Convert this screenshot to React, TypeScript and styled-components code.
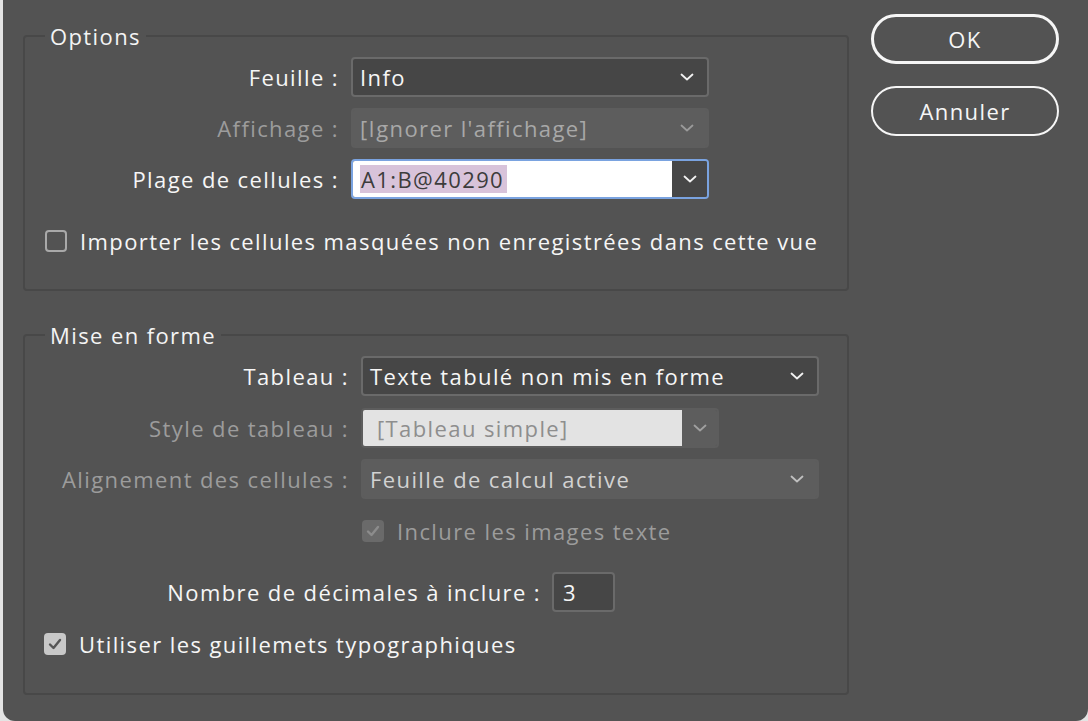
import React from 'react';
import styled, { createGlobalStyle } from 'styled-components';

const Global = createGlobalStyle`
  html, body {
    margin: 0;
    padding: 0;
    background: #e4e4e4;
    font-family: "Open Sans", "Liberation Sans", sans-serif;
  }
`;

const Page = styled.div`
  display: flex;
  width: 1088px;
  height: 721px;
  overflow: hidden;
  letter-spacing: 1.4px;
`;

const Dialog = styled.div`
  flex: 1;
  margin-left: 3px;
  background: #535353;
  border-bottom-left-radius: 12px;
  border-bottom-right-radius: 12px;
  display: flex;
  padding: 0 29px 0 20px;
  box-sizing: border-box;
`;

const Left = styled.div`
  width: 826px;
  display: flex;
  flex-direction: column;
`;

const Group = styled.fieldset<{ $top: number; $pb: number }>`
  margin: ${p => p.$top}px 0 0;
  padding: 0 0 ${p => p.$pb}px;
  border: 2px solid #484848;
  border-radius: 4px;
  min-inline-size: 0;
`;

const Legend = styled.legend`
  margin-left: 20px;
  padding: 0 5px;
  font-size: 22px;
  line-height: 26px;
  color: #f4f4f4;
`;

const Row = styled.div<{ $mt: number; $gap?: number }>`
  display: flex;
  align-items: center;
  gap: ${p => p.$gap ?? 12}px;
  margin-top: ${p => p.$mt}px;
  height: 40px;
`;

const Label = styled.div<{ $w: number; $dim?: boolean }>`
  width: ${p => p.$w}px;
  text-align: right;
  font-size: 22px;
  color: ${p => (p.$dim ? '#9c9c9c' : '#f6f6f6')};
  white-space: nowrap;
`;

const Select = styled.div<{ $w: number; $disabled?: boolean }>`
  width: ${p => p.$w}px;
  height: 40px;
  box-sizing: border-box;
  border-radius: 4px;
  display: flex;
  align-items: center;
  justify-content: space-between;
  padding: 0 13px 0 7px;
  font-size: 22px;
  background: ${p => (p.$disabled ? '#5d5d5d' : '#464646')};
  border: 2px solid ${p => (p.$disabled ? '#5d5d5d' : '#6a6a6a')};
  color: ${p => (p.$disabled ? '#a8a8a8' : '#f6f6f6')};
  white-space: nowrap;
`;

const SelectText = styled.span<{ $soft?: boolean }>`
  color: ${p => (p.$soft ? '#d2d2d2' : 'inherit')};
`;

const Combo = styled.div<{ $w: number; $focus?: boolean }>`
  width: ${p => p.$w}px;
  height: 40px;
  box-sizing: border-box;
  border-radius: 4px;
  display: flex;
  overflow: hidden;
  border: 2px solid ${p => (p.$focus ? '#7aa3e0' : '#5d5d5d')};
`;

const ComboField = styled.div<{ $light?: boolean }>`
  flex: 1;
  display: flex;
  align-items: center;
  padding-left: ${p => (p.$light ? 14 : 7)}px;
  font-size: 22px;
  background: ${p => (p.$light ? '#e3e3e3' : '#ffffff')};
  color: ${p => (p.$light ? '#8e8e8e' : '#3c3c3c')};
  white-space: nowrap;
`;

const Selected = styled.span`
  background: #d8c3da;
  padding: 0 3px 0 1px;
  line-height: 28px;
`;

const ComboButton = styled.div<{ $disabled?: boolean }>`
  width: 35px;
  display: flex;
  align-items: center;
  justify-content: center;
  background: ${p => (p.$disabled ? '#5d5d5d' : '#474747')};
`;

const NumberField = styled.div`
  width: 63px;
  height: 40px;
  box-sizing: border-box;
  border: 2px solid #6a6a6a;
  border-radius: 4px;
  background: #464646;
  color: #f6f6f6;
  font-size: 22px;
  display: flex;
  align-items: center;
  padding-left: 9px;
`;

const CheckRow = styled.div<{ $mt: number; $indent: number }>`
  display: flex;
  align-items: center;
  gap: 13px;
  margin-top: ${p => p.$mt}px;
  padding-left: ${p => p.$indent}px;
  height: 30px;
`;

const Box = styled.div<{ $state: 'off' | 'on' | 'dim' }>`
  width: 22px;
  height: 22px;
  box-sizing: border-box;
  border-radius: 4px;
  display: flex;
  align-items: center;
  justify-content: center;
  border: ${p => (p.$state === 'off' ? '2px solid #a9a9a9' : 'none')};
  background: ${p => (p.$state === 'on' ? '#c8c8c8' : p.$state === 'dim' ? '#6a6a6a' : 'transparent')};
`;

const CheckText = styled.div<{ $dim?: boolean }>`
  font-size: 22px;
  color: ${p => (p.$dim ? '#9c9c9c' : '#f6f6f6')};
  white-space: nowrap;
`;

const Buttons = styled.div`
  margin-left: 22px;
  padding-top: 14px;
  display: flex;
  flex-direction: column;
  gap: 22px;
`;

const Button = styled.div<{ $primary?: boolean }>`
  width: 188px;
  height: 50px;
  box-sizing: border-box;
  border-radius: 25px;
  border: ${p => (p.$primary ? 3 : 2)}px solid #f6f6f6;
  display: flex;
  align-items: center;
  justify-content: center;
  font-size: 22px;
  color: #f6f6f6;
`;

const Chevron = ({ color = '#f2f2f2' }: { color?: string }) => (
  <svg width="14" height="8" viewBox="0 0 14 8">
    <polyline points="1.5,1.5 7,6.5 12.5,1.5" fill="none" stroke={color} strokeWidth="1.8" strokeLinecap="round" strokeLinejoin="round" />
  </svg>
);

const Tick = ({ color }: { color: string }) => (
  <svg width="14" height="12" viewBox="0 0 14 12">
    <polyline points="2,6.5 5.5,10 12,2" fill="none" stroke={color} strokeWidth="2.4" strokeLinecap="round" strokeLinejoin="round" />
  </svg>
);

export default function App() {
  return (
    <Page>
      <Global />
      <Dialog>
        <Left>
          <Group $top={23} $pb={33}>
            <Legend>Options</Legend>
            <Row $mt={8}>
              <Label $w={314}>Feuille :</Label>
              <Select $w={358}>
                <SelectText>Info</SelectText>
                <Chevron />
              </Select>
            </Row>
            <Row $mt={11}>
              <Label $w={314} $dim>Affichage :</Label>
              <Select $w={358} $disabled>
                <SelectText>[Ignorer l'affichage]</SelectText>
                <Chevron color="#9a9a9a" />
              </Select>
            </Row>
            <Row $mt={11}>
              <Label $w={314}>Plage de cellules :</Label>
              <Combo $w={358} $focus>
                <ComboField>
                  <Selected>A1:B@40290</Selected>
                </ComboField>
                <ComboButton>
                  <Chevron />
                </ComboButton>
              </Combo>
            </Row>
            <CheckRow $mt={27} $indent={20}>
              <Box $state="off" />
              <CheckText>Importer les cellules masquées non enregistrées dans cette vue</CheckText>
            </CheckRow>
          </Group>

          <Group $top={31} $pb={34}>
            <Legend>Mise en forme</Legend>
            <Row $mt={8}>
              <Label $w={324}>Tableau :</Label>
              <Select $w={458}>
                <SelectText>Texte tabulé non mis en forme</SelectText>
                <Chevron />
              </Select>
            </Row>
            <Row $mt={12}>
              <Label $w={324} $dim>Style de tableau :</Label>
              <Combo $w={358}>
                <ComboField $light>[Tableau simple]</ComboField>
                <ComboButton $disabled>
                  <Chevron color="#a0a0a0" />
                </ComboButton>
              </Combo>
            </Row>
            <Row $mt={11}>
              <Label $w={324} $dim>Alignement des cellules :</Label>
              <Select $w={458} $disabled>
                <SelectText $soft>Feuille de calcul active</SelectText>
                <Chevron color="#c0c0c0" />
              </Select>
            </Row>
            <CheckRow $mt={17} $indent={337}>
              <Box $state="dim">
                <Tick color="#8c8c8c" />
              </Box>
              <CheckText $dim>Inclure les images texte</CheckText>
            </CheckRow>
            <Row $mt={26} $gap={11}>
              <Label $w={516}>Nombre de décimales à inclure :</Label>
              <NumberField>3</NumberField>
            </Row>
            <CheckRow $mt={17} $indent={19}>
              <Box $state="on">
                <Tick color="#555555" />
              </Box>
              <CheckText>Utiliser les guillemets typographiques</CheckText>
            </CheckRow>
          </Group>
        </Left>
        <Buttons>
          <Button $primary>OK</Button>
          <Button>Annuler</Button>
        </Buttons>
      </Dialog>
    </Page>
  );
}
